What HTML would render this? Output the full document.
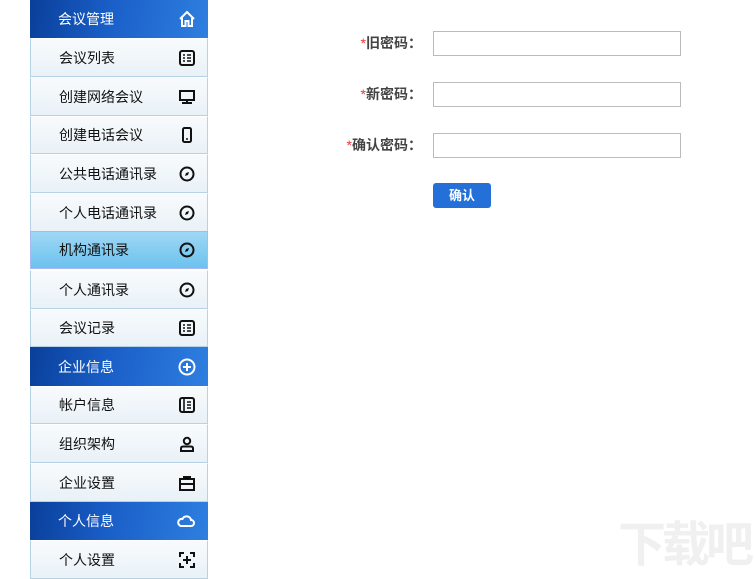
<!DOCTYPE html>
<html><head><meta charset="utf-8"><style>
body{margin:0;width:754px;height:567px;background:#fff;overflow:hidden;position:relative;font-family:"Liberation Sans","Noto Sans CJK SC",sans-serif}
.r{position:absolute;left:30px;width:178px;box-sizing:border-box;font-size:14px;color:#111}
.i{background:linear-gradient(#f8fbfd,#e9f1f7);border:1px solid #b5d2e6;border-top-color:#fff}
.h{background:linear-gradient(100deg,#0a3f9a 0%,#1a5fc8 45%,#2e7fe0 100%);color:#fff;border:none}
.a{background:linear-gradient(#9fd7f5,#6cc2ee);border:1px solid #a9b8f0}
.r span{position:absolute;left:28px;top:50%;transform:translateY(-50%)}
.r svg{position:absolute;right:12px;top:50%;transform:translateY(-50%)}
.lb{position:absolute;font-size:14px;font-weight:bold;color:#444;text-align:right;width:100px}
.lb b{color:#e33;font-weight:normal}
.in{position:absolute;left:433px;width:248px;height:25px;box-sizing:border-box;border:1px solid #bbb}
.btn{position:absolute;left:433px;top:183px;width:58px;height:25px;background:#2470d8;border-radius:3px;color:#fff;font-weight:bold;font-size:13px;text-align:center;line-height:25px}
</style></head><body>
<div class="r h" style="top:0;height:38px"><span>会议管理</span><svg width="18" height="18" viewBox="0 0 18 18"><path d="M2 9L9 2L16 9M4 8V16H7.5V11H10.5V16H14V8" fill="none" stroke="#fff" stroke-width="2"/></svg></div>
<div class="r i" style="top:38px;height:39px"><span>会议列表</span><svg width="16" height="16"><rect x="1" y="1" width="14" height="14" rx="2" fill="none" stroke="#111" stroke-width="2"/><path d="M4 5h2M8 5h4M4 8h2M8 8h4M4 11h2M8 11h4" stroke="#111" stroke-width="1.6"/></svg></div>
<div class="r i" style="top:77px;height:39px"><span>创建网络会议</span><svg width="16" height="16"><rect x="1" y="2" width="14" height="9" fill="none" stroke="#111" stroke-width="2"/><path d="M8 11v3M3 14h10" stroke="#111" stroke-width="2"/></svg></div>
<div class="r i" style="top:116px;height:38px"><span>创建电话会议</span><svg width="16" height="16"><rect x="4" y="1" width="8" height="14" rx="1.5" fill="none" stroke="#111" stroke-width="2"/><path d="M7 12h2" stroke="#111" stroke-width="1.5"/></svg></div>
<div class="r i" style="top:154px;height:39px"><span>公共电话通讯录</span><svg width="16" height="16"><circle cx="8" cy="8" r="6.5" fill="none" stroke="#111" stroke-width="2"/><path d="M6 10l1-3 3-1-1 3z" fill="#111"/></svg></div>
<div class="r i" style="top:193px;height:39px"><span>个人电话通讯录</span><svg width="16" height="16"><circle cx="8" cy="8" r="6.5" fill="none" stroke="#111" stroke-width="2"/><path d="M6 10l1-3 3-1-1 3z" fill="#111"/></svg></div>
<div class="r a" style="top:231px;height:38px"><span>机构通讯录</span><svg width="16" height="16"><circle cx="8" cy="8" r="6.5" fill="none" stroke="#111" stroke-width="2"/><path d="M6 10l1-3 3-1-1 3z" fill="#111"/></svg></div>
<div class="r i" style="top:270px;height:39px"><span>个人通讯录</span><svg width="16" height="16"><circle cx="8" cy="8" r="6.5" fill="none" stroke="#111" stroke-width="2"/><path d="M6 10l1-3 3-1-1 3z" fill="#111"/></svg></div>
<div class="r i" style="top:309px;height:38px"><span>会议记录</span><svg width="16" height="16"><rect x="1" y="1" width="14" height="14" rx="2" fill="none" stroke="#111" stroke-width="2"/><path d="M4 5h2M8 5h4M4 8h2M8 8h4M4 11h2M8 11h4" stroke="#111" stroke-width="1.6"/></svg></div>
<div class="r h" style="top:347px;height:39px"><span>企业信息</span><svg width="18" height="18"><circle cx="9" cy="9" r="7.5" fill="none" stroke="#fff" stroke-width="2"/><path d="M9 5v8M5 9h8" stroke="#fff" stroke-width="2"/></svg></div>
<div class="r i" style="top:386px;height:38px"><span>帐户信息</span><svg width="16" height="16"><rect x="1" y="1" width="14" height="14" rx="2" fill="none" stroke="#111" stroke-width="2"/><path d="M5 2v12M8 5h4M8 8h4M8 11h4" stroke="#111" stroke-width="1.6"/></svg></div>
<div class="r i" style="top:424px;height:39px"><span>组织架构</span><svg width="16" height="16"><circle cx="8" cy="5" r="3.2" fill="none" stroke="#111" stroke-width="2"/><path d="M2 15v-2.5q0-2 2-2h8q2 0 2 2V15z" fill="none" stroke="#111" stroke-width="2"/></svg></div>
<div class="r i" style="top:463px;height:39px"><span>企业设置</span><svg width="16" height="16"><rect x="1" y="4" width="14" height="11" fill="none" stroke="#111" stroke-width="2"/><path d="M5 4V2h6v2M1 9h14" stroke="#111" stroke-width="2"/></svg></div>
<div class="r h" style="top:502px;height:38px"><span>个人信息</span><svg width="20" height="16"><path d="M5 13h10a3 3 0 0 0 0-6a4.5 4.5 0 0 0-8.5-1A3.5 3.5 0 0 0 5 13z" fill="none" stroke="#fff" stroke-width="2"/></svg></div>
<div class="r i" style="top:540px;height:39px"><span>个人设置</span><svg width="16" height="16"><path d="M1 5V1h4M11 1h4v4M15 11v4h-4M5 15H1v-4M8 4v8M4 8h8" fill="none" stroke="#111" stroke-width="2"/></svg></div>

<div class="lb" style="left:322px;top:33px"><b>*</b>旧密码：</div>
<div class="in" style="top:31px"></div>
<div class="lb" style="left:322px;top:84px"><b>*</b>新密码：</div>
<div class="in" style="top:82px"></div>
<div class="lb" style="left:322px;top:135px"><b>*</b>确认密码：</div>
<div class="in" style="top:133px"></div>
<div class="btn">确认</div>
<div style="position:absolute;left:618px;top:505px;font-size:48px;color:#f0f0f0;font-weight:bold;letter-spacing:-4px">下载吧</div>
</body></html>
